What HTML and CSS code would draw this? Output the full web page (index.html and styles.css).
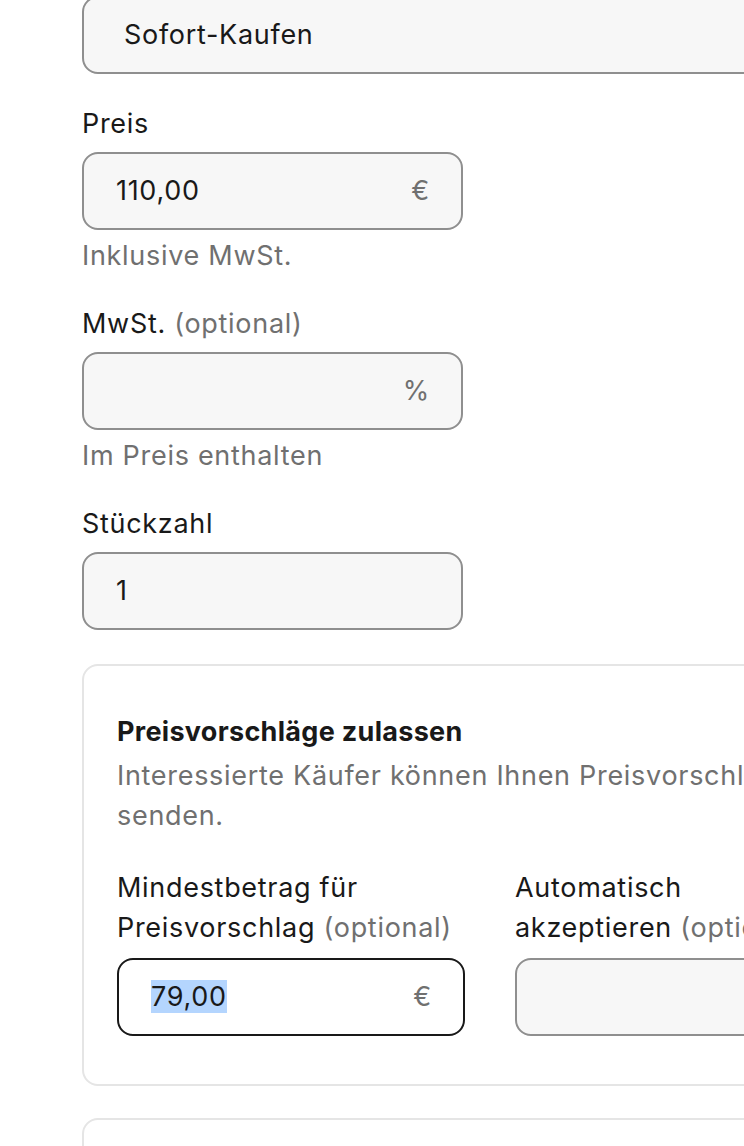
FILE: index.html
```html
<!DOCTYPE html>
<html lang="de">
<head>
    <meta charset="UTF-8">
    <meta name="viewport" content="width=device-width, initial-scale=1.0">
    <title>Angebotsformat</title>
    <link rel="stylesheet" href="styles.css">
</head>
<body>
    <div class="page">
        <div class="field select">
            <span class="value">Sofort-Kaufen</span>
        </div>

        <div class="group">
            <div class="label">Preis</div>
            <div class="field short">
                <span class="value">110,00</span>
                <span class="suffix">€</span>
            </div>
            <div class="hint">Inklusive MwSt.</div>
        </div>

        <div class="group">
            <div class="label">MwSt. <span class="muted">(optional)</span></div>
            <div class="field short">
                <span class="value"></span>
                <span class="suffix">%</span>
            </div>
            <div class="hint">Im Preis enthalten</div>
        </div>

        <div class="group">
            <div class="label">Stückzahl</div>
            <div class="field short">
                <span class="value">1</span>
            </div>
        </div>

        <div class="card">
            <h3>Preisvorschläge zulassen</h3>
            <p class="desc">Interessierte Käufer können Ihnen Preisvorschläge senden.</p>
            <div class="columns">
                <div class="col">
                    <div class="label">Mindestbetrag für Preisvorschlag <span class="muted">(optional)</span></div>
                    <div class="field focused">
                        <span class="value"><span class="selected">79,00</span></span>
                        <span class="suffix">€</span>
                    </div>
                </div>
                <div class="col">
                    <div class="label">Automatisch akzeptieren <span class="muted">(optional)</span></div>
                    <div class="field">
                        <span class="value"></span>
                        <span class="suffix">€</span>
                    </div>
                </div>
            </div>
        </div>

        <div class="card next"></div>
    </div>
</body>
</html>
```

FILE: styles.css
```css
html, body {
    margin: 0;
    padding: 0;
    background: #fff;
    overflow: hidden;
}
body {
    font-family: 'Inter', 'Noto Sans', sans-serif;
    font-size: 27px;
    letter-spacing: 0.7px;
    line-height: 40px;
    color: #191919;
}
.page {
    margin-top: -4px;
    padding-left: 82px;
    width: 800px;
}
.field {
    display: flex;
    align-items: center;
    justify-content: space-between;
    box-sizing: border-box;
    height: 78px;
    padding: 0 31px 0 32px;
    background: #f7f7f7;
    border: 2px solid #8f8f8f;
    border-radius: 16px;
}
.field.select {
    width: 720px;
    padding-left: 40px;
}
.field.short {
    width: 381px;
}
.suffix {
    color: #707070;
}
.group {
    margin-top: 30px;
}
.group + .group {
    margin-top: 28px;
}
.label {
    margin-bottom: 8px;
}
.muted {
    color: #707070;
}
.hint {
    margin-top: 6px;
    color: #707070;
}
.card {
    box-sizing: border-box;
    width: 800px;
    margin-top: 34px;
    padding: 46px 33px 48px;
    border: 2px solid #e5e5e5;
    border-radius: 16px;
}
.card h3 {
    margin: 0 0 4px;
    font-size: 27px;
    font-weight: 700;
    letter-spacing: 0.3px;
    line-height: 40px;
}
.card .desc {
    margin: 0;
    width: 720px;
    color: #707070;
}
.columns {
    display: grid;
    grid-template-columns: 348px 300px;
    column-gap: 50px;
    margin-top: 32px;
}
.columns .label {
    margin-bottom: 10px;
}
.field.focused {
    background: #fff;
    border-color: #191919;
}
.selected {
    background: #b4d5fe;
}
.card.next {
    height: 60px;
    margin-top: 32px;
    padding: 0;
}
```
